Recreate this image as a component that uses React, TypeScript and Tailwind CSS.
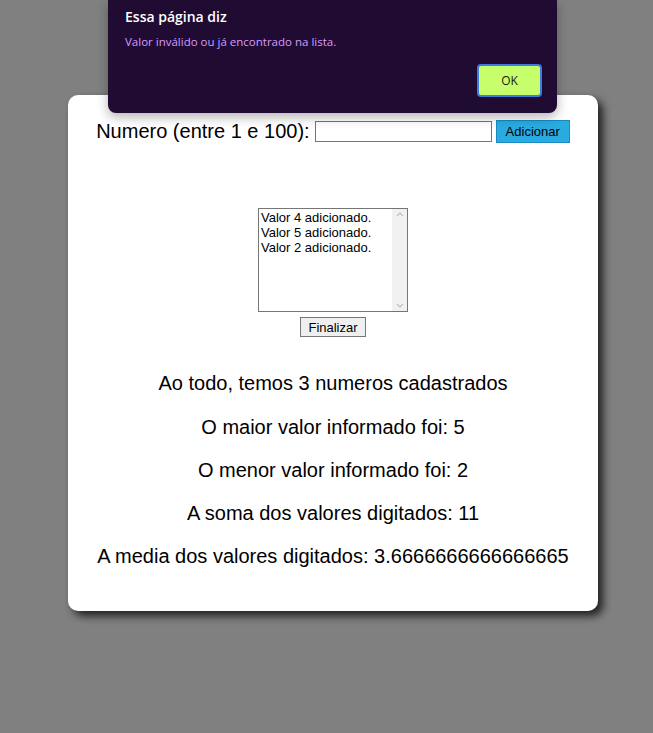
import React from "react";

export default function App() {
  const arial = { fontFamily: '"Liberation Sans", Arial, sans-serif' };
  return (
    <div className="relative h-[733px] w-full overflow-hidden bg-[#808080]" style={arial}>
      <div className="ml-[68px] mt-[95px] w-[530px] rounded-[10px] bg-white pt-[25px] pb-[43px] text-black shadow-[5px_5px_8px_rgba(0,0,0,0.75)] font-['Liberation_Sans',Arial,sans-serif]">
        <div className="flex items-center justify-center gap-[5px] text-[20px] leading-[23px]">
          <span>Numero (entre 1 e 100):</span>
          <input
            type="text"
            className="h-[21px] w-[177px] border border-[#767676] bg-white px-[2px] text-[13px] outline-none"
          />
          <button className="-ml-[1px] h-[23px] border border-[#1a8ac2] bg-[#29abe2] px-[9px] text-[13px] leading-[15px] text-black">
            Adicionar
          </button>
        </div>
        <div className="mt-[65px] flex flex-col items-center">
          <div className="flex h-[104px] w-[150px] border border-[#767676] bg-white">
            <div className="flex-1 px-[2px] pt-[1px] text-[13px] leading-[15px] text-black">
              <div>Valor 4 adicionado.</div>
              <div>Valor 5 adicionado.</div>
              <div>Valor 2 adicionado.</div>
            </div>
            <div className="flex w-[15px] flex-col items-center justify-between bg-[#f1f1f1] py-[2px] text-[#a3a3a3]">
              <svg width="8" height="6" viewBox="0 0 8 6"><path d="M1 5 L4 2 L7 5" fill="none" stroke="#c1c1c1" strokeWidth="1.2" /></svg>
              <svg width="8" height="6" viewBox="0 0 8 6"><path d="M1 1 L4 4 L7 1" fill="none" stroke="#c1c1c1" strokeWidth="1.2" /></svg>
            </div>
          </div>
          <button className="mt-[5px] h-[20px] border border-[#767676] bg-[#efefef] px-[7px] text-[13px] leading-[15px] text-black">
            Finalizar
          </button>
        </div>
        <div className="mt-[15px] flex flex-col items-center text-[20px] leading-[23px]">
          <p className="mt-[20px]">Ao todo, temos 3 numeros cadastrados</p>
          <p className="mt-[21px]">O maior valor informado foi: 5</p>
          <p className="mt-[20px]">O menor valor informado foi: 2</p>
          <p className="mt-[20px]">A soma dos valores digitados: 11</p>
          <p className="mt-[20px]">A media dos valores digitados: 3.6666666666666665</p>
        </div>
      </div>

      <div className="absolute left-[108px] top-0 h-[113px] w-[449px] rounded-b-[8px] bg-[#200b33] font-['Open_Sans',sans-serif] shadow-[0_4px_12px_rgba(0,0,0,0.3)]">
        <div className="pl-[17px] pt-[7px] text-[14px] font-semibold leading-[20px] text-white">Essa página diz</div>
        <div className="pl-[17px] pt-[7px] text-[11.5px] leading-[16px] text-[#d59cff]">
          Valor inválido ou já encontrado na lista.
        </div>
        <div className="flex justify-end pr-[15px] pt-[14px]">
          <button className="h-[33px] w-[65px] rounded-[4px] border-2 border-[#3c7be0] bg-[#c6ff6b] text-[12px] text-[#1a1a1a]">
            OK
          </button>
        </div>
      </div>
    </div>
  );
}
